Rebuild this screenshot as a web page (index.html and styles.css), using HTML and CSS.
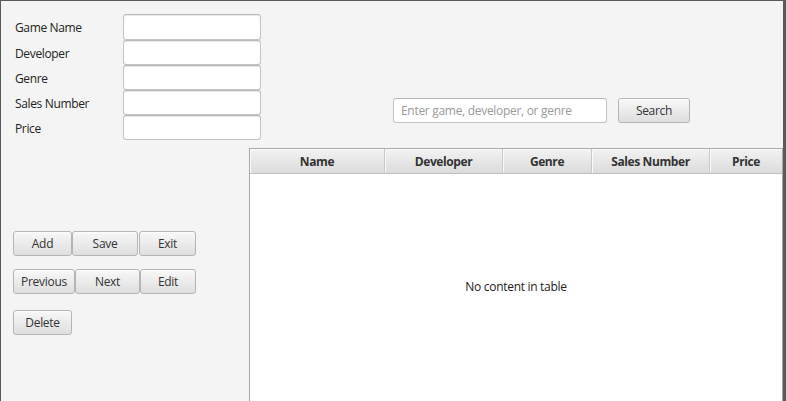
FILE: index.html
```html
<!DOCTYPE html>
<html>
<head>
<meta charset="utf-8">
<link rel="stylesheet" href="styles.css">
</head>
<body>
<div class="window">
  <div class="left">
    <div class="form">
      <div class="row first"><span class="label">Game Name</span><div class="field"></div></div>
      <div class="row"><span class="label">Developer</span><div class="field"></div></div>
      <div class="row"><span class="label">Genre</span><div class="field"></div></div>
      <div class="row"><span class="label">Sales Number</span><div class="field"></div></div>
      <div class="row"><span class="label">Price</span><div class="field"></div></div>
    </div>
    <div class="btnrow r1">
      <button class="btn w-add">Add</button>
      <button class="btn w-save">Save</button>
      <button class="btn w-exit">Exit</button>
    </div>
    <div class="btnrow r2">
      <button class="btn w-prev">Previous</button>
      <button class="btn w-next">Next</button>
      <button class="btn w-edit">Edit</button>
    </div>
    <div class="btnrow r3">
      <button class="btn w-del">Delete</button>
    </div>
  </div>
  <div class="right">
    <div class="search">
      <div class="sfield">Enter game, developer, or genre</div>
      <button class="btn w-search">Search</button>
    </div>
    <div class="table">
      <div class="thead">
        <div class="th c1">Name</div>
        <div class="th c2">Developer</div>
        <div class="th c3">Genre</div>
        <div class="th c4">Sales Number</div>
        <div class="th c5">Price</div>
      </div>
      <div class="tbody">No content in table</div>
    </div>
  </div>
</div>
</body>
</html>
```
FILE: styles.css
```css
* { box-sizing: border-box; }
html, body { margin: 0; padding: 0; background: #5a5a5a; }
body { font-family: "Open Sans", "Noto Sans", sans-serif; font-size: 12px; color: #333; }
.window {
  width: 786px; height: 401px;
  background: #f4f4f4;
  border-top: 1px solid #5a5a5a;
  border-left: 1px solid #5a5a5a;
  border-right: 3px solid #5a5a5a;
  display: flex;
  overflow: hidden;
}
.left { width: 248px; flex-shrink: 0; padding: 13px 0 0 12px; display: flex; flex-direction: column; position: relative; z-index: 1; }
.form { display: flex; flex-direction: column; }
.row { display: flex; align-items: center; height: 25px; }
.row.first { height: 26px; }
.label { width: 110px; flex-shrink: 0; padding-left: 2px; padding-top: 1px; color: #222; letter-spacing: -0.35px; }
.field {
  width: 138px; height: 100%; flex-shrink: 0;
  background: #fff;
  border: 1px solid #c4c4c4;
  border-top-color: #b8b8b8;
  border-radius: 3px;
  box-shadow: inset 0 1px 1px #e8e8e8;
}
.btnrow { display: flex; }
.r1 { margin-top: 91px; }
.r2 { margin-top: 13px; }
.r3 { margin-top: 16px; }
.btn {
  height: 25px; padding: 0; flex-shrink: 0;
  font-family: inherit; font-size: 12px; color: #333;
  border: 1px solid #b5b5b5;
  border-radius: 3px;
  background: linear-gradient(#f8f8f8, #dedede);
  box-shadow: inset 0 1px 0 #fdfdfd;
  letter-spacing: -0.3px;
}
.w-add { width: 59px; }
.w-save { width: 66px; }
.w-exit { width: 57px; margin-left: 1px; }
.w-prev { width: 62px; }
.w-next { width: 65px; }
.w-edit { width: 56px; }
.w-del { width: 59px; }
.w-search { width: 72px; margin-left: 11px; }
.right { width: 534px; flex-shrink: 0; display: flex; flex-direction: column; padding-top: 97px; }
.search { display: flex; height: 25px; padding-left: 144px; }
.sfield {
  width: 214px; height: 25px;
  background: #fff;
  border: 1px solid #c4c4c4;
  border-top-color: #b8b8b8;
  border-radius: 3px;
  color: #9a9a9a;
  line-height: 23px;
  padding-left: 7px;
  letter-spacing: -0.3px;
}
.table {
  margin-top: 25px;
  flex: 1;
  border: 1px solid #a8a8a8;
  border-bottom: none;
  background: #fff;
  display: flex; flex-direction: column;
}
.thead { display: flex; height: 25px; border-bottom: 1px solid #c0c0c0; background: linear-gradient(#f2f2f2, #dcdcdc); }
.th {
  display: flex; align-items: center; justify-content: center;
  font-weight: bold; color: #333;
  border-right: 1px solid #c8c8c8;
  box-shadow: inset 1px 1px 0 #fafafa;
  letter-spacing: -0.4px;
}
.c1 { width: 135px; }
.c2 { width: 118px; }
.c3 { width: 89px; }
.c4 { width: 118px; }
.c5 { flex: 1; border-right: none; }
.tbody { flex: 1; display: flex; align-items: center; justify-content: center; color: #222; padding-bottom: 2px; letter-spacing: -0.3px; }
```
